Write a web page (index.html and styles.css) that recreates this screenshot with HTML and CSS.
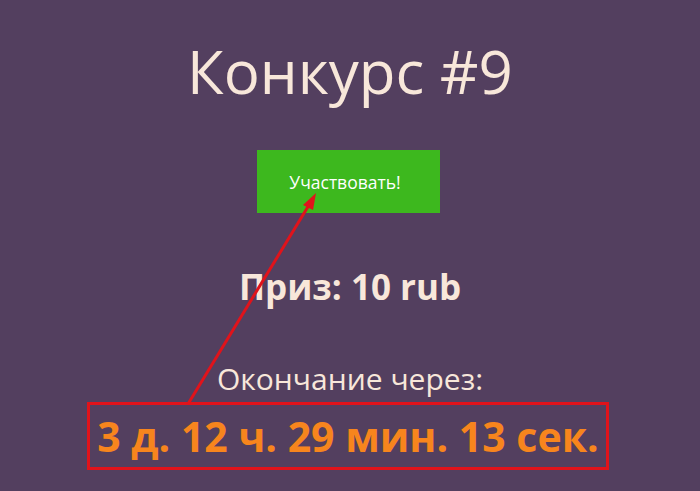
FILE: index.html
```html
<!DOCTYPE html>
<html lang="ru">
<head>
<meta charset="utf-8">
<link rel="stylesheet" href="styles.css">
</head>
<body>
<main class="page">
  <h1 class="title">Конкурс #9</h1>
  <a class="join" href="#">Участвовать!</a>
  <div class="prize">Приз: 10 rub</div>
  <div class="ends">Окончание через:</div>
  <div class="timer">3 д. 12 ч. 29 мин. 13 сек.</div>
  <svg class="arrow" width="700" height="491" viewBox="0 0 700 491">
    <line x1="188" y1="404" x2="309" y2="205" stroke="#e0131b" stroke-width="3"/>
    <polygon points="316,193 303,205 313,210" fill="#e0131b"/>
  </svg>
</main>
</body>
</html>
```
FILE: styles.css
```css
html, body {
  margin: 0;
  padding: 0;
}
body {
  background: #533f5f;
  width: 700px;
  height: 491px;
  overflow: hidden;
  font-family: "Open Sans", "Liberation Sans", sans-serif;
}
.page {
  position: relative;
  display: flex;
  flex-direction: column;
  align-items: center;
  height: 491px;
  color: #f8e7da;
}
.title {
  margin: 41px 0 0;
  font-size: 60px;
  font-weight: 400;
  line-height: 1;
}
.join {
  margin-top: 49px;
  margin-left: -4px;
  width: 183px;
  height: 63px;
  display: flex;
  align-items: center;
  justify-content: center;
  background: #3db81e;
  color: #ffffff;
  text-decoration: none;
  font-size: 17.5px;
  padding-right: 6px;
  box-sizing: border-box;
}
.prize {
  margin-top: 56px;
  font-size: 35px;
  font-weight: 700;
  line-height: 1;
}
.ends {
  margin-top: 60px;
  font-size: 30px;
  line-height: 1;
}
.timer {
  margin-top: 8px;
  margin-left: -4px;
  width: 516px;
  height: 62px;
  border: 3px solid #e0131b;
  display: flex;
  align-items: center;
  justify-content: center;
  color: #f7851d;
  font-size: 41px;
  font-weight: 700;
  line-height: 1;
}
.arrow {
  position: absolute;
  left: 0;
  top: 0;
  pointer-events: none;
}
```
